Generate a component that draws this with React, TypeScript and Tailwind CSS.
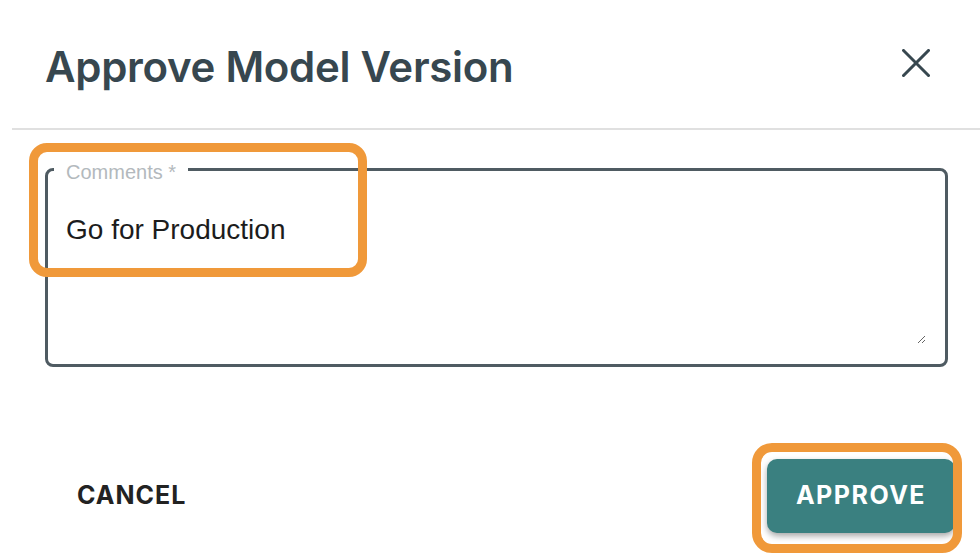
import React from 'react';

// ─── Icons ─────────────────────────────────────────────────────────────────────

const CloseIcon: React.FC = () => (
  <svg width="28" height="28" viewBox="0 0 28 28" fill="none">
    <path d="M1.5 1.5 L26.5 26.5 M26.5 1.5 L1.5 26.5" stroke="#37474f" strokeWidth="3" strokeLinecap="square" />
  </svg>
);

// ─── App ───────────────────────────────────────────────────────────────────────

const App: React.FC = () => {
  return (
    <div className="relative w-[980px] h-[560px] overflow-hidden bg-white">
      {/* Header */}
      <div className="flex items-center justify-between h-[128px] pl-[45px] pr-[50px]">
        <h2 className="font-['Inter',sans-serif] font-semibold text-[42px] tracking-[-0.3px] text-[#37474f] leading-none pt-[6px]">
          Approve Model Version
        </h2>
        <button className="flex items-center justify-center pb-[2px]">
          <CloseIcon />
        </button>
      </div>
      <div className="ml-[12px] h-[2px] bg-[#e0e0e0]" />

      {/* Body */}
      <div className="pl-[45px] pr-[32px] pt-[26px]">
        <fieldset className="h-[211px] border-[3px] border-[#4f5b62] rounded-[8px] pl-[18px] pr-[19px] pb-[20px] flex flex-col">
          <legend className="-ml-[12px] px-[12px] pt-[6px] font-['Liberation_Sans',Arial,sans-serif] text-[20px] leading-[20px] text-[#b3b9bd]">
            Comments *
          </legend>
          <textarea
            defaultValue="Go for Production"
            className="mt-[27px] flex-1 w-full outline-none bg-transparent font-['Liberation_Sans',Arial,sans-serif] text-[28px] text-[#1c1c1c] leading-normal"
          />
        </fieldset>
      </div>

      {/* Footer */}
      <div className="flex items-center justify-between pl-[77px] pr-[25px] mt-[92px]">
        <button className="font-['Inter',sans-serif] font-bold text-[25px] tracking-[1px] text-[#222222]">
          CANCEL
        </button>
        <button className="w-[188px] h-[74px] rounded-[10px] bg-[#3a8080] shadow-[0_3px_6px_rgba(0,0,0,0.35)] font-['Inter',sans-serif] font-bold text-[25px] tracking-[1.5px] text-white">
          APPROVE
        </button>
      </div>

      {/* Highlight annotations */}
      <div className="absolute left-[29px] top-[143px] w-[338px] h-[134px] rounded-[18px] border-[9px] border-[#f0993a]" />
      <div className="absolute left-[752px] top-[443px] w-[210px] h-[110px] rounded-[20px] border-[9px] border-[#f0993a]" />
    </div>
  );
};

export default App;
